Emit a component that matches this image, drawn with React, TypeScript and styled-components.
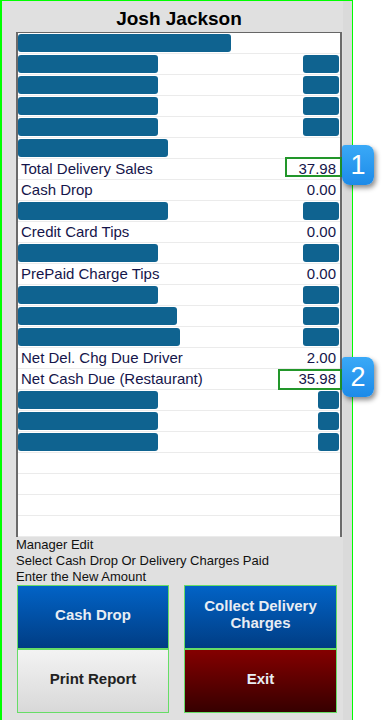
import React from "react";
import styled, { createGlobalStyle } from "styled-components";

const GlobalStyle = createGlobalStyle`
  html, body { margin: 0; padding: 0; background: #ffffff; }
  body { font-family: Arial, "Liberation Sans", sans-serif; }
  * { box-sizing: border-box; }
`;

const Frame = styled.div`
  width: 353px;
  height: 720px;
  background: #e0e0e0;
  border-left: 2px solid #00ff00;
  border-top: 1px solid #00ff00;
  border-right: 1px solid #00ff00;
  padding-left: 14px;
  box-shadow: inset -9px 0 0 #dadada;
`;

const Title = styled.div`
  width: 326px;
  height: 31px;
  text-align: center;
  font-size: 19px;
  font-weight: bold;
  line-height: 35px;
  color: #000;
`;

const ListBox = styled.div`
  width: 326px;
  height: 505px;
  background: #ffffff;
  border-top: 1px solid #666666;
  border-left: 2px solid #6a6a6a;
  border-right: 2px solid #6a6a6a;
  overflow: visible;
`;

const Row = styled.div`
  position: relative;
  height: 21px;
  border-bottom: 1px solid #ebebeb;
  display: flex;
  align-items: flex-start;
  justify-content: space-between;
`;

const Bar = styled.div<{ $w: number }>`
  width: ${(p) => p.$w}px;
  height: 18px;
  margin-top: 1px;
  border-radius: 3px;
  background: #0f6390;
`;

const RightBar = styled(Bar)`
  margin-right: 1px;
`;

const Label = styled.span`
  padding-left: 3px;
  font-size: 15px;
  line-height: 20px;
  color: #15154a;
`;

const Value = styled.span`
  padding-right: 4px;
  font-size: 15px;
  line-height: 20px;
  color: #15154a;
`;

const ValueBox = styled.div<{ $w: number; $top: number; $h: number }>`
  position: absolute;
  right: -2px;
  top: ${(p) => p.$top}px;
  width: ${(p) => p.$w}px;
  height: ${(p) => p.$h}px;
  border: 2px solid #22962a;
`;

const Badge = styled.div<{ $top: number }>`
  position: absolute;
  left: 324px;
  top: ${(p) => p.$top}px;
  width: 32px;
  height: 40px;
  border-radius: 3px 8px 8px 8px;
  background: linear-gradient(#3aa9f7, #1c8ae8);
  box-shadow: 2px 3px 5px rgba(0, 0, 0, 0.45);
  color: #ffffff;
  font-size: 27px;
  line-height: 40px;
  text-align: center;
  z-index: 2;
`;

const Notes = styled.div`
  font-size: 13px;
  line-height: 16px;
  color: #111;
`;

const Buttons = styled.div`
  margin-left: 1px;
  display: grid;
  grid-template-columns: 152px 153px;
  grid-template-rows: 64px 64px;
  column-gap: 15px;
`;

const Btn = styled.div<{ $kind: "blue" | "light" | "red" }>`
  border: 1px solid #66dd66;
  display: flex;
  align-items: center;
  justify-content: center;
  text-align: center;
  font-size: 15px;
  font-weight: bold;
  line-height: 17px;
  padding-bottom: 6px;
  color: ${(p) => (p.$kind === "light" ? "#222222" : "#e8edf4")};
  background: ${(p) =>
    p.$kind === "blue"
      ? "linear-gradient(#0263c6, #003d84)"
      : p.$kind === "red"
      ? "linear-gradient(#840000, #360000)"
      : "linear-gradient(#f3f3f3, #d8d8d8)"};
`;

type RowDef =
  | { kind: "bar"; left: number; right?: number }
  | { kind: "text"; label: string; value: string; box?: { w: number; top: number; h: number }; badge?: { n: string; top: number } }
  | { kind: "empty" };

const rows: RowDef[] = [
  { kind: "bar", left: 213 },
  { kind: "bar", left: 140, right: 36 },
  { kind: "bar", left: 140, right: 36 },
  { kind: "bar", left: 140, right: 36 },
  { kind: "bar", left: 140, right: 36 },
  { kind: "bar", left: 150 },
  { kind: "text", label: "Total Delivery Sales", value: "37.98", box: { w: 57, top: -2, h: 20 }, badge: { n: "1", top: -14 } },
  { kind: "text", label: "Cash Drop", value: "0.00" },
  { kind: "bar", left: 150, right: 36 },
  { kind: "text", label: "Credit Card Tips", value: "0.00" },
  { kind: "bar", left: 140, right: 36 },
  { kind: "text", label: "PrePaid Charge Tips", value: "0.00" },
  { kind: "bar", left: 140, right: 36 },
  { kind: "bar", left: 159, right: 36 },
  { kind: "bar", left: 162, right: 36 },
  { kind: "text", label: "Net Del. Chg Due Driver", value: "2.00" },
  { kind: "text", label: "Net Cash Due (Restaurant)", value: "35.98", box: { w: 64, top: 0, h: 21 }, badge: { n: "2", top: -12 } },
  { kind: "bar", left: 140, right: 21 },
  { kind: "bar", left: 140, right: 21 },
  { kind: "bar", left: 140, right: 21 },
  { kind: "empty" },
  { kind: "empty" },
  { kind: "empty" },
  { kind: "empty" },
];

export default function App() {
  return (
    <>
      <GlobalStyle />
      <Frame>
        <Title>Josh Jackson</Title>
        <ListBox>
          {rows.map((r, i) => (
            <Row key={i}>
              {r.kind === "bar" && (
                <>
                  <Bar $w={r.left} />
                  {r.right ? <RightBar $w={r.right} /> : null}
                </>
              )}
              {r.kind === "text" && (
                <>
                  <Label>{r.label}</Label>
                  <Value>{r.value}</Value>
                  {r.box && <ValueBox $w={r.box.w} $top={r.box.top} $h={r.box.h} />}
                  {r.badge && <Badge $top={r.badge.top}>{r.badge.n}</Badge>}
                </>
              )}
            </Row>
          ))}
        </ListBox>
        <Notes>
          Manager Edit
          <br />
          Select Cash Drop Or Delivery Charges Paid
          <br />
          Enter the New Amount
        </Notes>
        <Buttons>
          <Btn $kind="blue">Cash Drop</Btn>
          <Btn $kind="blue">
            Collect Delivery
            <br />
            Charges
          </Btn>
          <Btn $kind="light">Print Report</Btn>
          <Btn $kind="red">Exit</Btn>
        </Buttons>
      </Frame>
    </>
  );
}
